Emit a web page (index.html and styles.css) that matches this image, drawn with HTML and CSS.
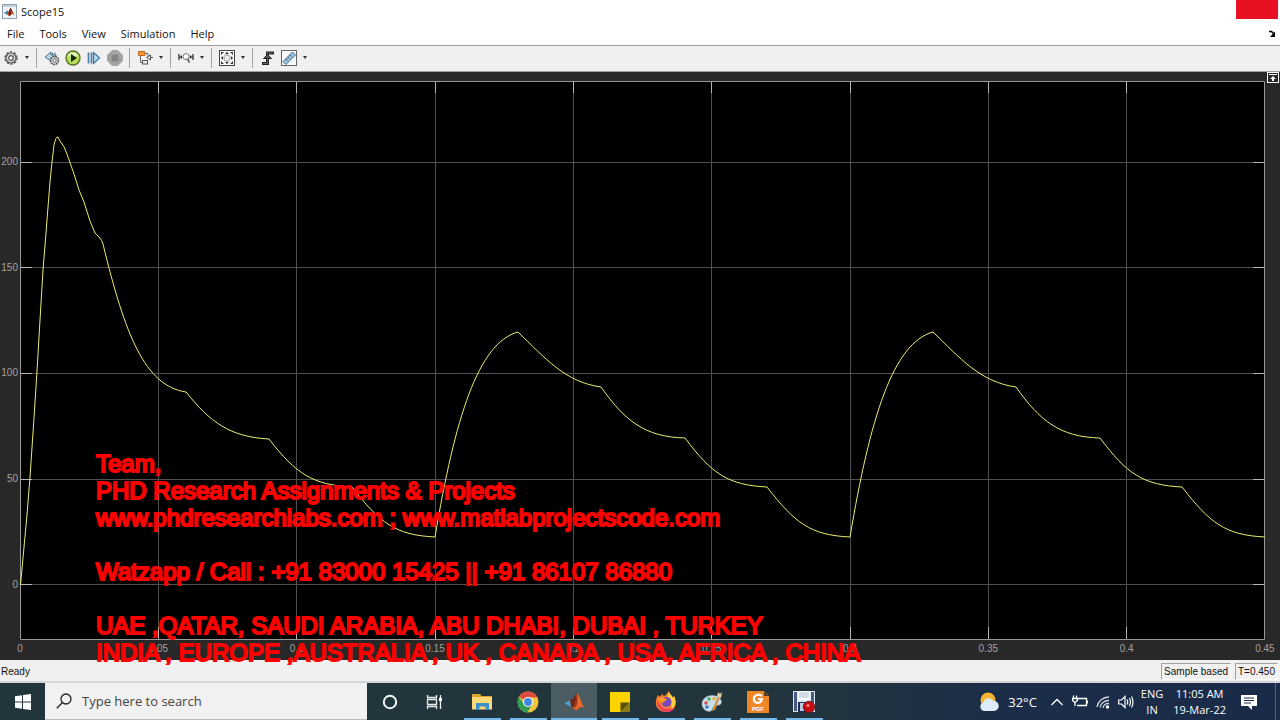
FILE: index.html
```html
<!DOCTYPE html>
<html lang="en">
<head>
<meta charset="utf-8">
<title>Scope15</title>
<link rel="stylesheet" href="styles.css">
</head>
<body>
<header class="titlebar">
  <svg class="app-icon" viewBox="0 0 16 16" aria-hidden="true">
    <rect x=".5" y=".5" width="15" height="15" fill="#eef3f8" stroke="#8c9cab"/>
    <path d="M1 1h14v2H1z" fill="#b9cfe2"/>
    <path d="M2 9.500l4-2.500 1.500 2-2 2.500z" fill="#4b7fa8"/>
    <path d="M5.500 11.500L9 4l1.500 2.500L13.500 12l-2.500-1.500L8 13z" fill="#c24a1d"/>
    <path d="M9 4l1.500 2.500L9.500 11 8 13 7 9z" fill="#6e1f12"/>
  </svg>
  <h1 class="title">Scope15</h1>
  <button class="close" aria-label="Close"></button>
</header>

<nav class="menubar" aria-label="Menu">
  <button>File</button><button>Tools</button><button>View</button><button>Simulation</button><button>Help</button>
  <button class="dock" aria-label="Dock"><svg viewBox="0 0 8 8"><path d="M1 1.500h2.500L6 4" fill="none" stroke="#000" stroke-width="1.500"/><path d="M7 1.500V7H2z"/></svg></button>
</nav>

<div class="toolbar" role="toolbar" aria-label="Scope tools">
  <button class="tool" aria-label="Settings"><svg viewBox="0 0 16 16"><circle cx="8" cy="8" r="6" fill="none" stroke="#666" stroke-width="1.500" stroke-dasharray="2.400 1.370"/><circle cx="8" cy="8" r="5" fill="#ddd" stroke="#555" stroke-width="1.200"/><circle cx="8" cy="8" r="2.300" fill="#f2f2f2" stroke="#4c4c4c" stroke-width="1.200"/></svg></button>
  <button class="drop" aria-label="Settings menu"></button>
  <span class="sep"></span>
  <button class="tool" aria-label="Step back"><svg viewBox="0 0 16 16"><path d="M1 7l6-5v3h5v2l-5 1v3z" fill="#b8d3e4" stroke="#4f7186"/><path d="M8.500 2.500V5M11 2.500V5" stroke="#4f7186"/><circle cx="10.500" cy="10.500" r="4" fill="#e2e2e2" stroke="#555" stroke-width="1.500" stroke-dasharray="2 .7"/><circle cx="10.500" cy="10.500" r="1.700" fill="#fff" stroke="#555"/></svg></button>
  <button class="tool" aria-label="Run"><svg viewBox="0 0 16 16"><circle cx="8" cy="8" r="7" fill="#b8dd5c" stroke="#54722a" stroke-width="1.400"/><path d="M3 5.500a5.500 5.500 0 0 1 10 0Q8 8 3 5.500" fill="#e4f5b4"/><path d="M6 4l6 4-6 4z" fill="#17250c"/></svg></button>
  <button class="tool" aria-label="Step forward"><svg viewBox="0 0 16 16"><path d="M2.500 2.500v11M5.500 2.500v11" stroke="#4a7fac" stroke-width="1.700"/><path d="M7.500 2.500l6 5.500-6 5.500z" fill="#b6d9f4" stroke="#3f759f" stroke-width="1.200"/></svg></button>
  <button class="tool" aria-label="Stop" disabled><svg viewBox="0 0 16 16"><path d="M5 .7h6L15.300 5v6L11 15.300H5L.7 11V5z" fill="#a4a4a4" stroke="#999"/><rect x="4.500" y="4.500" width="7" height="7" fill="#858585"/></svg></button>
  <span class="sep"></span>
  <button class="tool" aria-label="Highlight block"><svg viewBox="0 0 16 16"><path d="M3.500 6v6.500H6M8 3.500h3v4" fill="none" stroke="#666"/><rect x="1.500" y="1.500" width="6.500" height="4" rx=".5" fill="#f59a31" stroke="#b96717"/><path d="M13.500 5v5l-4-2.500z" fill="#eee" stroke="#555"/><rect x="5.500" y="10.500" width="5" height="3.500" fill="#eee" stroke="#555"/><path d="M13.500 7.500H16" stroke="#555"/></svg></button>
  <button class="drop" aria-label="Block menu"></button>
  <span class="sep"></span>
  <button class="tool" aria-label="Zoom"><svg viewBox="0 0 16 16"><path d="M1 4v6M15 4v6M3.500 5.500v3M12.500 5.500v3M1 7h2.500M15 7h-2.500" fill="none" stroke="#222" stroke-width="1.200"/><circle cx="8" cy="6.500" r="3" fill="#fff" stroke="#777"/><path d="M9.500 9l2 3.500" stroke="#444" stroke-width="1.500"/></svg></button>
  <button class="drop" aria-label="Zoom menu"></button>
  <span class="sep"></span>
  <button class="tool" aria-label="Fit to view"><svg viewBox="0 0 16 16"><rect x=".5" y=".5" width="15" height="15" fill="#fff" stroke="#444"/><rect x="5.500" y="5.500" width="5" height="5" fill="#e9f0f5" stroke="#bbb"/><path d="M8 1.800l2 2.400H6zM8 14.200l2-2.400H6zM1.800 8l2.400-2v4zM14.200 8l-2.400-2v4zM2 2h3L2 5zM14 2v3l-3-3zM2 14v-3l3 3zM14 14h-3l3-3z" fill="#333"/></svg></button>
  <button class="drop" aria-label="Fit menu"></button>
  <span class="sep"></span>
  <button class="tool" aria-label="Triggers"><svg viewBox="0 0 16 16"><path d="M2 13.500h5.500V3H14" fill="none" stroke="#222" stroke-width="3"/><path d="M3 13.500h4.500V3H13" fill="none" stroke="#777" stroke-width=".8"/><path d="M3.500 8.500L7.500 4.500l4 4z" fill="#555" stroke="#222"/></svg></button>
  <button class="tool" aria-label="Measurements"><svg viewBox="0 0 16 16"><rect x=".5" y=".5" width="15" height="15" fill="#fafafa" stroke="#666"/><path d="M2 11.500L11.500 2l3 3L5 14.500z" fill="#9cc3dc" stroke="#456d87"/><path d="M5 9l1.500 1.500M7 7l1.500 1.500M9 5l1.500 1.500" stroke="#355a72"/></svg></button>
  <button class="drop" aria-label="Measurements menu"></button>
</div>

<main class="scope">
  <div class="y-axis">
    <div><span>200</span></div><div><span>150</span></div><div><span>100</span></div><div><span>50</span></div><div><span>0</span></div>
  </div>
  <svg class="plot" viewBox="20 81 1245 559" preserveAspectRatio="none" role="img" aria-label="Signal against time">
    <rect x="20" y="81" width="1245" height="559" fill="#000"/>
    <path class="grid" d="M158.500 81v558M296.500 81v558M435.500 81v558M573.500 81v558M711.500 81v558M850.500 81v558M988.500 81v558M1126.500 81v558M20 162.500h1245M20 267.500h1245M20 373.500h1245M20 479.500h1245M20 584.500h1245"/>
    <path class="tick" d="M158.500 81v12M296.500 81v12M435.500 81v12M573.500 81v12M711.500 81v12M850.500 81v12M988.500 81v12M1126.500 81v12M158.500 627v12M296.500 627v12M435.500 627v12M573.500 627v12M711.500 627v12M850.500 627v12M988.500 627v12M1126.500 627v12M20 162.500h12M20 267.500h12M20 373.500h12M20 479.500h12M20 584.500h12M1253 162.500h12M1253 267.500h12M1253 373.500h12M1253 479.500h12M1253 584.500h12"/>
    <rect class="frame" x="20.500" y="81.500" width="1244" height="558"/>
    <path class="signal" d="M20.500 585L24 547 27 515 30 477 34 418 37 371 40 320 43 270 46 233 48 207 50 182 52 162 54 145Q56 136 58 137L60 141Q64 145 67 154L74 174 79 190 84 202 90 221 95 233 99 237Q102 240 103 244C125 335 145 386 186 392C210 422 230 437 269 439C296 474 313 485 352 487C380 523 395 535 435 537"/>
    <path id="cycle" class="signal" d="M435 537C455 418 478 343 518 332C545 358 565 382 601 387C625 421 645 437 685 438C712 474 728 485 767 487C795 523 810 535 850 537"/>
    <use href="#cycle" x="415"/>
  </svg>
  <button class="maximize" aria-label="Maximize axes"><svg viewBox="0 0 12 11"><rect x=".5" y=".5" width="11" height="10" fill="#282828" stroke="#fff"/><path d="M2 2h8v1H2zM6 4l3 3H7v2H5V7H3z" fill="#fff"/></svg></button>
  <div class="x-axis">
    <span>0</span><span>0.05</span><span>0.1</span><span>0.15</span><span>0.2</span><span>0.25</span><span>0.3</span><span>0.35</span><span>0.4</span><span>0.45</span>
  </div>
  <div class="watermark">
    <p>Team,<br>PHD Research Assignments &amp; Projects<br>www.phdresearchlabs.com ; www.matlabprojectscode.com</p>
    <p>Watzapp / Call : +91 83000 15425 || +91 86107 86880</p>
    <p>UAE ,QATAR, SAUDI ARABIA, ABU DHABI, DUBAI , TURKEY<br>INDIA , EUROPE ,AUSTRALIA , UK , CANADA , USA, AFRICA , CHINA</p>
  </div>
</main>

<div class="statusbar">
  <span class="ready">Ready</span>
  <span class="cell">Sample based</span>
  <span class="cell">T=0.450</span>
</div>

<footer class="taskbar">
  <button class="start" aria-label="Start"><svg viewBox="0 0 16 16"><path d="M0 2.200l7-1v6.300H0zM8 1l8-1v7.500H8zM0 8.500h7v6.300l-7-1zM8 8.500h8V16l-8-1z" fill="#fff"/></svg></button>
  <label class="search">
    <svg viewBox="0 0 16 16" aria-hidden="true"><circle cx="10" cy="6" r="5" fill="none" stroke="#222" stroke-width="1.300"/><path d="M6.500 9.500L.8 15.200" stroke="#222" stroke-width="1.300"/></svg>
    <input type="text" placeholder="Type here to search" aria-label="Search">
  </label>
  <div class="apps">
    <button aria-label="Cortana"><svg viewBox="0 0 22 22"><circle cx="11" cy="11" r="6.200" fill="none" stroke="#f2f7f8" stroke-width="2"/></svg></button>
    <button aria-label="Task view"><svg viewBox="0 0 22 22"><path d="M2.500 4v2.500h9V4M2.500 18v-2.500h9V18M2.500 8.500h9v5h-9zM15.500 4v14" fill="none" stroke="#e8eef0" stroke-width="1.300"/><rect x="14" y="7" width="3" height="3" fill="#fff"/></svg></button>
    <button class="open" aria-label="File Explorer"><svg viewBox="0 0 22 22"><path d="M1 3h8l1.500 2H21v13H1z" fill="#d9a52f"/><path d="M1 6h20v12.500H1z" fill="#fbd975"/><path d="M5 19v-7h13v7h-3.500v-3.500h-6V19z" fill="#3c91ca"/></svg></button>
    <button class="open" aria-label="Chrome"><svg viewBox="0 0 22 22"><circle cx="11" cy="11" r="10.500" fill="#f4c63c"/><path d="M11 11L1.900 5.800A10.500 10.500 0 0 1 20.500 6.500H11z" fill="#dd4b3e"/><path d="M1.900 5.800a10.500 10.500 0 0 0 8.600 15.700l4.600-8.200L11 15l-4-2z" fill="#2e9e57"/><circle cx="11" cy="11" r="5" fill="#fff"/><circle cx="11" cy="11" r="3.900" fill="#4285e8"/></svg></button>
    <button class="open active" aria-label="MATLAB"><svg viewBox="0 0 22 22"><path d="M1 12l7-3 3 3-3 4z" fill="#4d9cc9"/><path d="M7 9l3-1 4-6 1 6-3 10-4-3z" fill="#6d2518"/><path d="M14 2c2 1 4 10 7.500 15-3-2-5-1-8.500 3-1-2-2-3-4-3 4-3 4-10 5-15z" fill="#e66a2c"/><path d="M14 2c1 4 1 9-1 14l-4 1c4-3 4-10 5-15z" fill="#9d301a"/></svg></button>
    <button class="open" aria-label="Sticky Notes"><svg viewBox="0 0 22 22"><path d="M1 1h20v20H1z" fill="#fdd400"/><path d="M11.500 11.500H21L11.500 21z" fill="#57500e"/><path d="M21 11.500V21h-9.500z" fill="#8a7a16"/></svg></button>
    <button class="open" aria-label="Firefox"><svg viewBox="0 0 22 22"><path d="M3 4l2 2 2-3 2 2c2 0 3-3 5-5 0 3 3 4 4 7l1-2c4 7 1 16-8 16C2 21-2 13 3 4z" fill="#ff7d2d"/><path d="M14 0c0 3 3 4 4 7l1-2c3 6 1 12-3 14 2-5-1-9-4-11z" fill="#ffd13d"/><path d="M2 9c-1 7 4 12 10 12 4 0 7-2 8-5-4 3-14 4-18-7z" fill="#ef3d5c"/><circle cx="11.500" cy="11" r="5" fill="#7947bd"/><path d="M4 7c4-2 5 1 8 1-1 3-4 2-4 4-2 0-4-2-4-5z" fill="#ff9a2f"/></svg></button>
    <button class="open" aria-label="Paint"><svg viewBox="0 0 22 22"><path d="M1 13C1 6 9 3 15 5s7 8 3 9-5 0-6 3-3 4-6 3-5-4-5-7z" fill="#c9dfec" stroke="#8fb1c3" stroke-width=".6"/><circle cx="5" cy="12" r="1.800" fill="#d94b4b"/><circle cx="8" cy="8" r="1.800" fill="#54a85b"/><circle cx="13" cy="7.500" r="1.700" fill="#e9ad32"/><circle cx="6" cy="16" r="1.800" fill="#3974c5"/><path d="M11 20l6-15 2 1-5 13z" fill="#d18b45"/><path d="M16 6l1-5 2 2 2-2-1 6z" fill="#e7cfaa"/></svg></button>
    <button class="open" aria-label="Foxit PDF"><svg viewBox="0 0 22 22"><path d="M0 0h17l5 5v17H0z" fill="#ef8624"/><path d="M17 0v5h5z" fill="#533d23"/><path d="M15 5C11 2 6 5 7 9s7 4 8-1h-4" fill="none" stroke="#fff" stroke-width="2.200"/><text x="11" y="20" text-anchor="middle" class="pdf">PDF</text></svg></button>
    <button class="open" aria-label="Screen Recorder"><svg viewBox="0 0 22 22"><path d="M0 0h22v21H0z" fill="#dfe8f2"/><path d="M1 1h3v19H1zM18 1h3v19h-3z" fill="#465b86"/><path d="M5 0h12v9H5z" fill="#fff"/><path d="M6 2h10M6 4h10M6 6h10" stroke="#a8b5c9"/><path d="M5 11h12v10H5z" fill="#1f2d55"/><path d="M7 12h4v8H7z" fill="#bfcbdd"/><circle cx="16" cy="16" r="5.800" fill="#c50d14" stroke="#571015" stroke-width=".7"/><circle cx="15" cy="14.500" r="1.600" fill="#ff7b76"/></svg></button>
  </div>
  <div class="tray">
    <button class="weather"><svg viewBox="0 0 20 20" aria-hidden="true"><circle cx="9" cy="8" r="7.500" fill="#f8b532"/><path d="M5 19a4.500 4.500 0 0 1-.5-8.700A5.500 5.500 0 0 1 14.500 9 5 5 0 0 1 15 19z" fill="#dcecf8"/></svg>32°C</button>
    <button class="tray-icon" aria-label="Hidden icons"><svg viewBox="0 0 16 16"><path d="M2.500 11L8 5.500l5.500 5.500" fill="none" stroke="#fff" stroke-width="1.300"/></svg></button>
    <button class="tray-icon" aria-label="Battery"><svg viewBox="0 0 16 16"><path d="M6 4.500h8.500v7H5M15.500 6.500v3M1.500 1.500v3M4.500 1.500v3M.5 4.500h5v2l-2.500 2-2.500-2zM3 8v4" fill="none" stroke="#fff" stroke-width="1.300"/></svg></button>
    <button class="tray-icon" aria-label="Wi-Fi"><svg viewBox="0 0 16 16"><path d="M2 13A12 12 0 0 1 14 3M5 13.500A8.500 8.500 0 0 1 14 6.500M8 14a5.500 5.500 0 0 1 6-4.500" fill="none" stroke="#c8d1dc" stroke-width="1.400"/><circle cx="12.500" cy="13" r="1.700" fill="#fff"/></svg></button>
    <button class="tray-icon" aria-label="Volume"><svg viewBox="0 0 16 16"><path d="M.7 6h2.800L7 2.500v11L3.500 10H.7zM9 5.500q1.500 2.500 0 5M11.300 4q2.400 4 0 8M13.500 2.500q3 5.500 0 11" fill="none" stroke="#fff" stroke-width="1.200"/></svg></button>
    <button class="lang">ENG<br>IN</button>
    <button class="clock">11:05 AM<br>19-Mar-22</button>
    <button class="notes" aria-label="Notifications"><svg viewBox="0 0 16 16"><path d="M0 1h16v11h-5v4l-4-4H0z" fill="#fff"/><path d="M3 4h10M3 6.500h10M3 9h7" stroke="#1c2d48"/></svg></button>
  </div>
</footer>
</body>
</html>
```
FILE: styles.css
```css
* { box-sizing: border-box; }
body {
  margin: 0;
  min-height: 100vh;
  display: flex;
  flex-direction: column;
  background: #282828;
  font-family: "Open Sans", "Noto Sans", sans-serif;
  font-size: 11px;
  color: #111;
}
button {
  border: 0;
  padding: 0;
  background: none;
  font: inherit;
  color: inherit;
}
svg { display: block; }

.titlebar {
  display: flex;
  align-items: center;
  height: 22px;
  padding-left: 2px;
  background: #fff;
}
.app-icon { width: 15px; height: 15px; }
.title { margin: 0 auto 0 4px; font-size: 11px; font-weight: 400; }
.close { align-self: flex-start; width: 42px; height: 19px; margin-right: 2px; background: #e81123; }

.menubar {
  display: flex;
  align-items: center;
  gap: 15px;
  height: 24px;
  padding: 0 4px 0 7px;
  background: #fff;
  border-bottom: 1px solid #a0a0a0;
}
.dock { margin-left: auto; }
.dock svg { width: 8px; height: 8px; }

.toolbar {
  display: flex;
  align-items: center;
  height: 26px;
  background: #f0f0f0;
  border-bottom: 1px solid #a0a0a0;
  padding-bottom: 2px;
}
.tool { width: 21px; height: 22px; display: grid; place-items: center; }
.tool svg { width: 16px; height: 16px; }
.drop { width: 11px; height: 22px; display: grid; place-items: center; }
.drop::before {
  content: "";
  border: 2px solid transparent;
  border-top: 3px solid #333;
  border-bottom: 0;
}
.sep { width: 1px; height: 20px; margin: 0 4px; background: #a5a5a5; }

.scope {
  flex: 1;
  position: relative;
  display: grid;
  grid-template-columns: 20px minmax(0, 1fr) 15px;
  grid-template-rows: minmax(300px, 1fr) 20px;
  padding-top: 9px;
  background: #282828;
  color: #a2a2a2;
  font-family: "Liberation Sans", Arial, sans-serif;
  font-size: 10px;
}
.y-axis { display: flex; flex-direction: column; padding-right: 2px; }
.y-axis div { flex: 106 1 0; display: flex; justify-content: flex-end; align-items: flex-end; }
.y-axis div:first-child { flex-grow: 81; }
.y-axis span { height: 0; line-height: 0; }
.y-axis::after { content: ""; flex: 55 1 0; }
.plot { width: 100%; height: 100%; min-height: 0; }
.plot path, .plot rect { vector-effect: non-scaling-stroke; }
.grid { stroke: #505050; fill: none; }
.tick { stroke: #b4b4b4; fill: none; }
.frame { stroke: #999; fill: none; }
.signal { stroke: #ecec72; fill: none; stroke-width: 1; }
.maximize { position: absolute; top: 0; right: 1px; }
.maximize svg { width: 12px; height: 11px; }
.x-axis { grid-column: 2; display: flex; justify-content: space-between; line-height: 18px; }
.x-axis span { width: 0; display: flex; justify-content: center; }

.watermark {
  position: absolute;
  left: 96px;
  bottom: -6px;
  color: #f00;
  font-size: 24px;
  line-height: 27px;
  white-space: nowrap;
  -webkit-text-stroke: 2px #f00;
}
.watermark p { margin: 27px 0 0; }

.statusbar {
  display: flex;
  align-items: center;
  gap: 4px;
  height: 23px;
  padding: 2px 2px 0 1px;
  background: #f0f0f0;
  border-bottom: 2px solid #d2d6d8;
  font-family: "Liberation Sans", Arial, sans-serif;
  font-size: 10px;
}
.ready { margin-right: auto; }
.cell {
  height: 17px;
  padding: 0 2px;
  line-height: 16px;
  border: 1px solid;
  border-color: #a0a0a0 #fff #fff #a0a0a0;
}

.taskbar {
  display: flex;
  height: 37px;
  background: linear-gradient(90deg, #22353c 0%, #22353d 62%, #1b2d48 80%, #1a2b49 100%);
  color: #fff;
}
.start { width: 45px; display: grid; place-items: center; }
.start svg { width: 16px; height: 16px; }
.search {
  display: flex;
  align-items: center;
  gap: 10px;
  flex: 0 1 322px;
  padding-left: 11px;
  background: #f1f1f1;
  border-bottom: 1px solid #bbb;
}
.search svg { width: 16px; height: 16px; }
.search input {
  flex: 1;
  min-width: 0;
  padding: 0;
  border: 0;
  background: none;
  font: 13px "Open Sans", "Noto Sans", sans-serif;
}
.search input::placeholder { color: #444; opacity: 1; }
.apps { display: flex; margin-right: auto; }
.apps button { width: 46px; display: grid; place-items: center; }
.apps svg { width: 22px; height: 22px; }
.open {
  background: linear-gradient(#76b9ed, #76b9ed) center bottom / 37px 2px no-repeat;
}
.apps .active { background-color: #4b5c63; background-size: 46px 2px; }
.pdf { font: 700 6px "Liberation Sans", sans-serif; fill: #fff; }
.tray { display: flex; align-items: center; gap: 7px; padding-right: 4px; }
.weather { display: flex; align-items: center; gap: 9px; margin-right: 5px; font-size: 13px; }
.weather svg { width: 20px; height: 20px; }
.tray-icon svg { width: 16px; height: 16px; }
.lang, .clock { font-size: 11px; line-height: 16px; text-align: center; }
.clock { margin-left: 3px; }
.notes { height: 37px; margin-left: 8px; padding-right: 18px; border-right: 1px solid #53627a; }
.notes svg { width: 16px; height: 16px; }
```
